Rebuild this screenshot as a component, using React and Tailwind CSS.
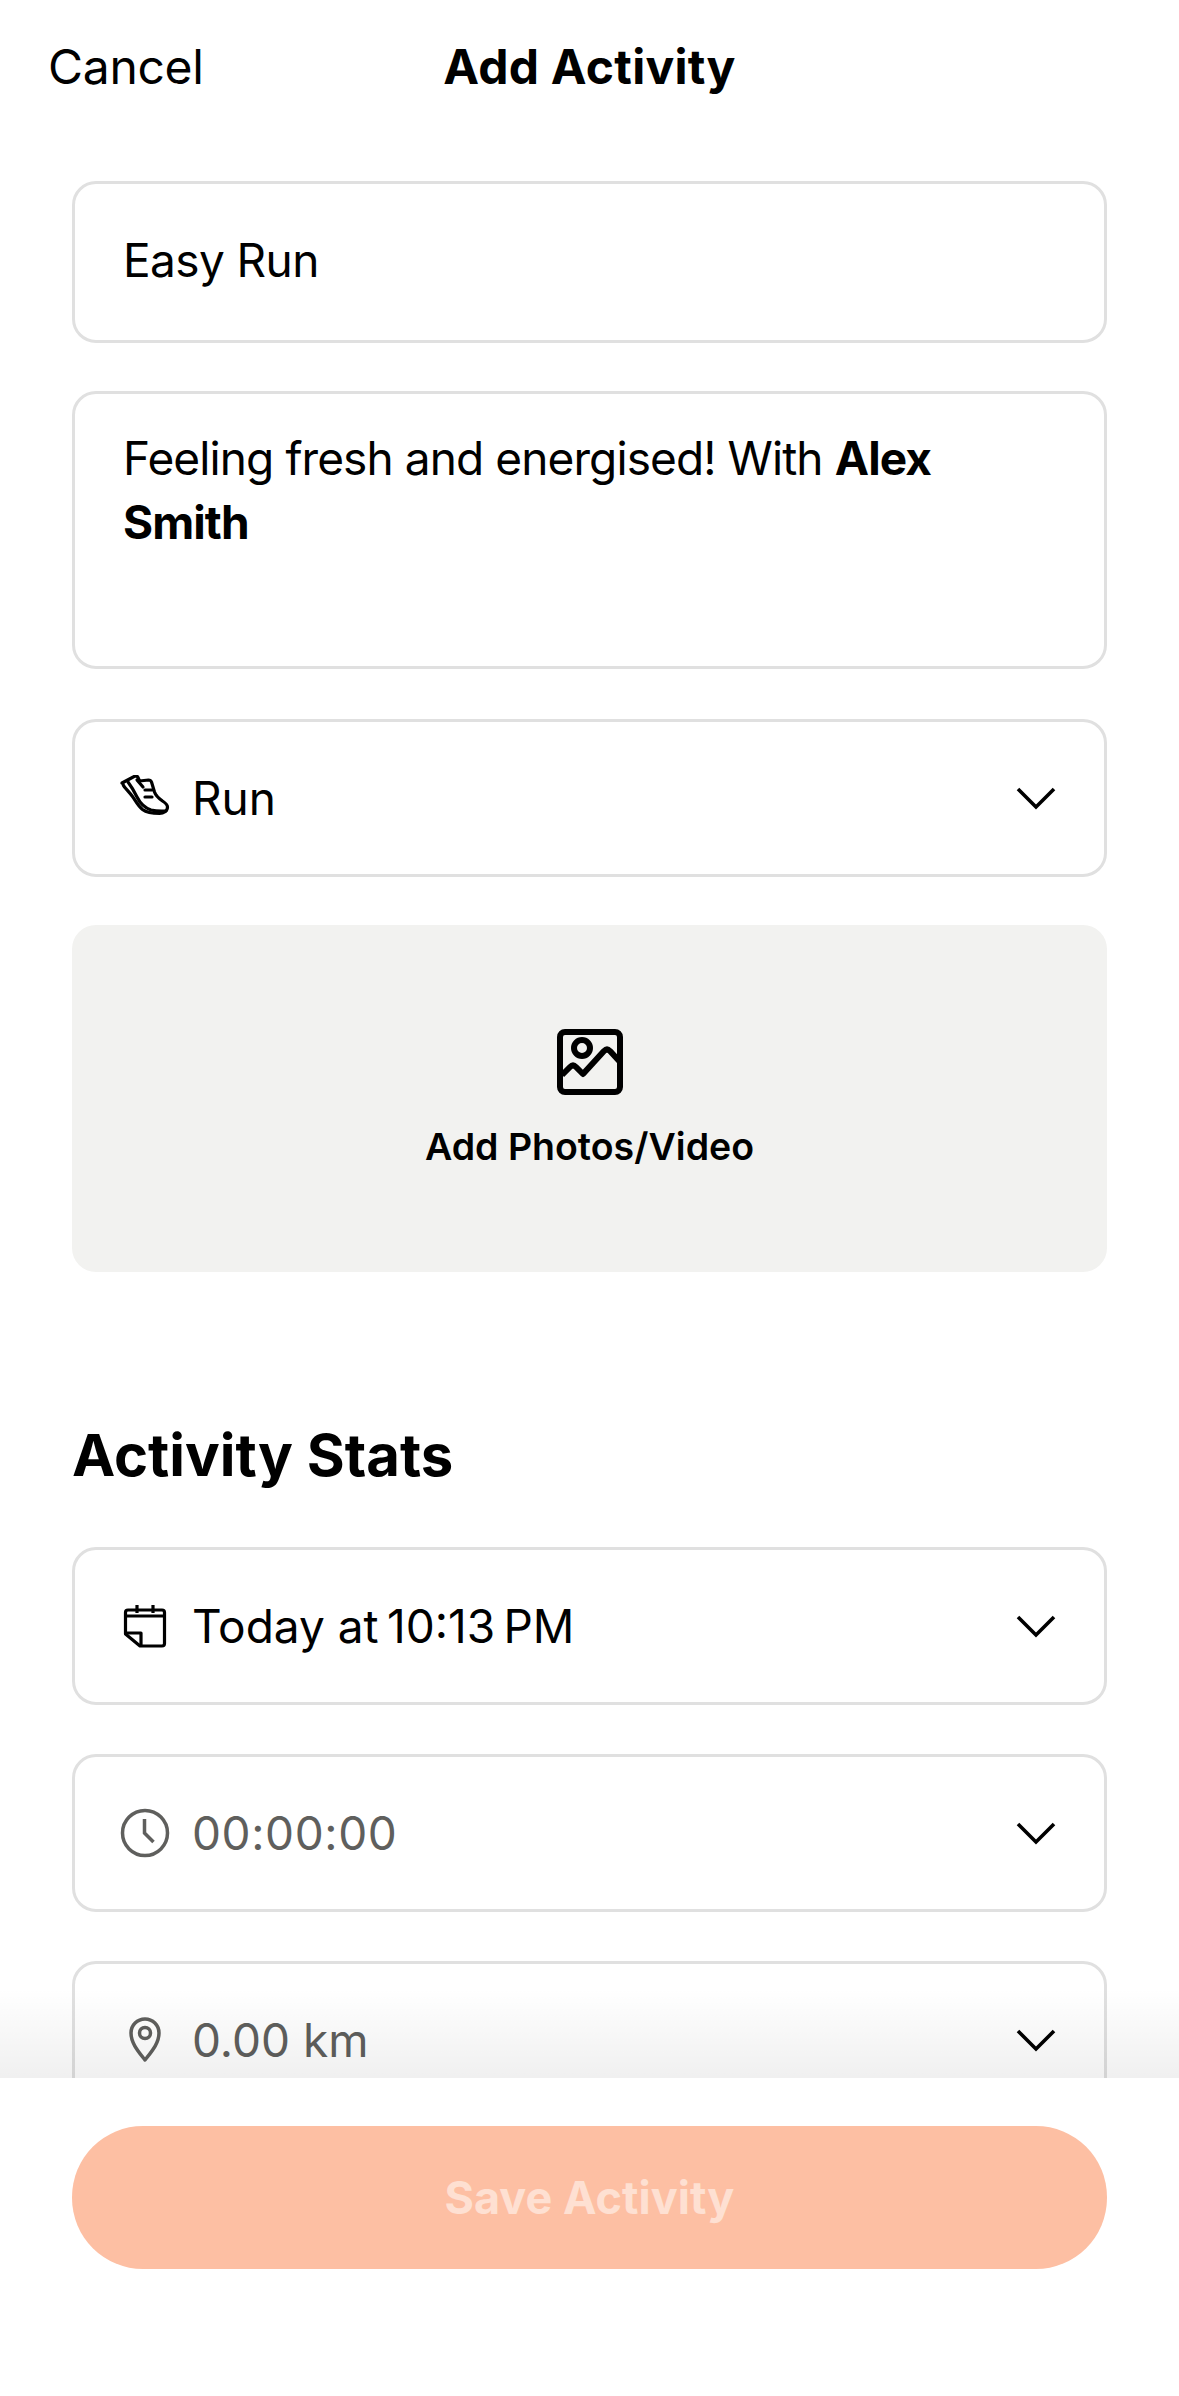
const Chevron = () => (
  <svg width="44" height="24" viewBox="0 0 44 24" fill="none" stroke="#000" strokeWidth="3.6" className="shrink-0">
    <path d="M4 3l18 18L40 3" />
  </svg>
);

const ShoeIcon = () => (
  <svg width="50" height="46" viewBox="20 24 50 46" fill="none" stroke="#000" strokeWidth="3.2" strokeLinejoin="round" strokeLinecap="round" className="shrink-0">
    <path d="M22 32l13-7c1.500-.5 2.500.5 3 1.500l1.500 3.500 9-1c1.500 0 2.500.7 3 2l3 10c1 3 3 5.500 8 9 3 2 5 3.500 5 6 0 4-4 6.500-8 6.500-7 0-13-1-17-4-5-4-7-9-10-13-3-4-6-7-8-9.500-1-1-1.500-2-1.500-3.500z" />
    <path d="M28 31c3 4 6 9 9 15 3 6 8 11 14 13 4 1 9 1.500 15 1" />
    <path d="M37 29l6 7" />
    <path d="M45 39h7M45 46h7" />
  </svg>
);

const ImageIcon = () => (
  <svg width="66" height="66" viewBox="0 0 66 66" fill="none" stroke="#000" strokeWidth="6" strokeLinejoin="round" className="shrink-0">
    <rect x="3" y="3" width="60" height="60" rx="5" />
    <circle cx="25" cy="19" r="8" />
    <path d="M5 46l8-8c2-2 4-2 6 0l7 7 21-23c2-2 4-2 6 0l11 12" />
  </svg>
);

const CalendarIcon = () => (
  <svg width="44" height="44" viewBox="22 24 44 44" fill="none" stroke="#000" strokeWidth="3.2" strokeLinejoin="round" className="shrink-0">
    <path d="M27 30h34c1.500 0 2.500 1 2.500 2.500v31c0 1.500-1 2.500-2.500 2.500H39L24.500 54V32.500c0-1.500 1-2.500 2.500-2.500z" />
    <path d="M24.500 36h39M36 25v8M52 25v8" />
    <path d="M24.500 53H40v13" />
  </svg>
);

const ClockIcon = () => (
  <svg width="50" height="50" viewBox="0 0 50 50" fill="none" stroke="#5f5f5d" strokeWidth="3.5" className="shrink-0">
    <circle cx="25" cy="25" r="22.500" />
    <path d="M24.500 11v14l9 9" />
  </svg>
);

const PinIcon = () => (
  <svg width="32" height="46" viewBox="0 0 32 46" fill="none" stroke="#5f5f5d" strokeWidth="3.5" strokeLinejoin="round" className="shrink-0">
    <path d="M16 43C9 34 2 26 2 16a14 14 0 0 1 28 0c0 10-7 18-14 27z" />
    <circle cx="16" cy="16" r="5.500" />
  </svg>
);

function SelectRow({ icon, label, muted, digits }) {
  return (
    <div className="h-[158px] border-[3px] border-[#e0e0e0] rounded-[24px] flex items-center pl-[45px] pr-[46px] shrink-0">
      <div className="w-[50px] flex justify-center shrink-0">{icon}</div>
      <span className={`ml-[22px] flex-1 text-[46px] ${muted ? 'text-[#5f5f5d]' : 'text-black'} ${digits ? 'tracking-[0.6px]' : ''}`}>{label}</span>
      <Chevron />
    </div>
  );
}

export default function App() {
  return (
    <div className="relative w-[1179px] h-[2396px] bg-white overflow-hidden flex flex-col font-['Inter',sans-serif] text-black">
      {/* Top bar */}
      <header className="h-[134px] shrink-0 relative flex items-center justify-center">
        <span className="absolute left-[48px] text-[48px] tracking-[-0.3px]">Cancel</span>
        <span className="text-[48px] font-bold tracking-[0.25px]">Add Activity</span>
      </header>

      {/* Scrolling form */}
      <main className="flex-1 min-h-0 overflow-hidden px-[72px] pt-[47px] flex flex-col">
        <div className="h-[162px] shrink-0 border-[3px] border-[#e0e0e0] rounded-[24px] px-[48px] flex items-center pb-[4px] text-[46px] tracking-[-0.6px]">
          Easy Run
        </div>
        <div className="h-[278px] shrink-0 mt-[48px] border-[3px] border-[#e0e0e0] rounded-[24px] px-[48px] pt-[32px] text-[46px] leading-[64px] tracking-[-0.9px]">
          <p>Feeling fresh and energised! With <b className="font-bold">Alex</b></p>
          <p className="font-bold">Smith</p>
        </div>
        <div className="mt-[50px]">
          <SelectRow icon={<ShoeIcon />} label="Run" />
        </div>
        <div className="h-[347px] shrink-0 mt-[48px] bg-[#f2f2f0] rounded-[24px] flex flex-col items-center pt-[104px]">
          <ImageIcon />
          <span className="mt-[24px] text-[37.5px] font-semibold">Add Photos/Video</span>
        </div>
        <h2 className="mt-[150px] text-[58px] leading-[66px] font-bold">Activity Stats</h2>
        <div className="mt-[59px] flex flex-col gap-[49px]">
          <SelectRow icon={<CalendarIcon />} label={'Today at\u200910:13\u2009PM'} />
          <SelectRow icon={<ClockIcon />} label="00:00:00" muted digits />
          <SelectRow icon={<PinIcon />} label="0.00 km" muted />
        </div>
      </main>

      {/* Soft shadow cast by the footer over the form */}
      <div className="absolute left-0 right-0 bottom-[318px] h-[90px] bg-gradient-to-b from-black/0 to-black/[0.06] pointer-events-none" />

      <footer className="h-[318px] shrink-0 bg-white px-[72px] pt-[48px]">
        <button className="w-full h-[143px] rounded-[71px] bg-[#fdbfa3] text-[#fee0d2] text-[45px] font-bold">
          Save Activity
        </button>
      </footer>
    </div>
  );
}
